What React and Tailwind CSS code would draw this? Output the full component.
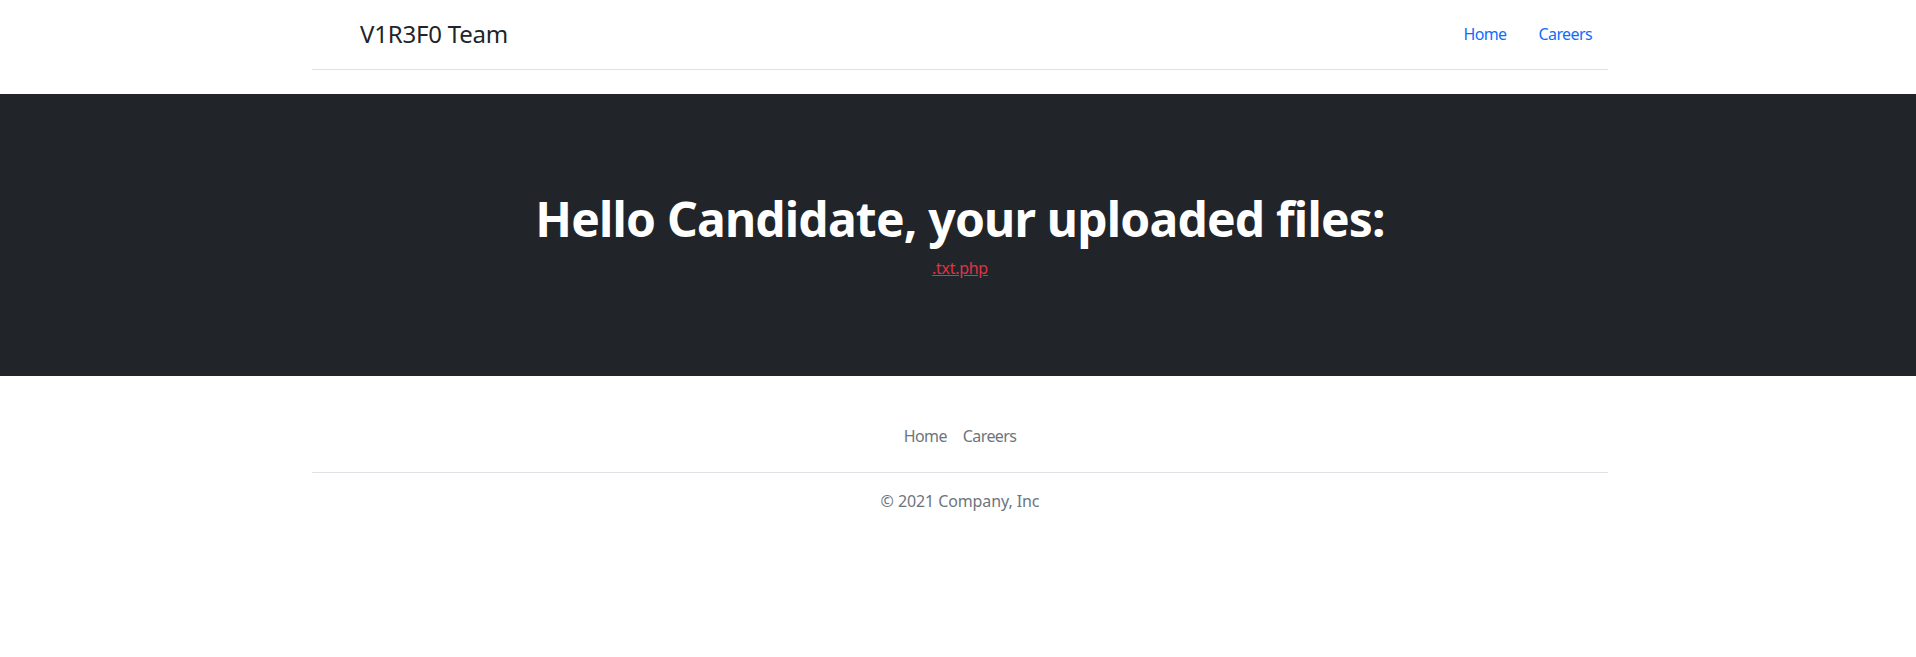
export default function App() {
    return (
        <div className="min-h-[657px] bg-white text-[#212529] font-['Noto_Sans',_'Open_Sans',_sans-serif]">
            {/* Header */}
            <div className="w-[1300px] mx-auto pl-1">
                <header className="flex items-center h-[70px] border-b border-[#dee2e6] mb-6">
                    <a href="#" className="flex items-center mr-auto text-[#212529] no-underline">
                        <svg className="mr-2" width="40" height="32"></svg>
                        <span className="text-2xl leading-9 tracking-[-0.2px] -mt-0.5">V1R3F0 Team</span>
                    </a>
                    <ul className="flex -mt-0.5">
                        <li><a href="#" className="block px-4 py-2 leading-6 text-base tracking-[-0.6px] text-[#0d6efd]">Home</a></li>
                        <li><a href="#" className="block px-4 py-2 leading-6 text-base tracking-[-0.6px] text-[#0d6efd]">Careers</a></li>
                    </ul>
                </header>
            </div>

            {/* Hero */}
            <div className="bg-[#212529] pl-[28px] pr-6 py-12 text-center">
                <div className="py-12">
                    <h1 className="text-5xl leading-[1.2] font-bold tracking-[-0.8px] text-white mb-2">Hello Candidate, your uploaded files:</h1>
                    <div className="leading-6">
                        <a href="#" className="text-base tracking-[-0.3px] text-[#dc3545] underline">.txt.php</a>
                    </div>
                </div>
            </div>

            {/* Footer */}
            <div className="w-[1300px] mx-auto pl-1">
                <footer className="py-4 my-6">
                    <ul className="flex justify-center border-b border-[#dee2e6] pb-4 mb-4">
                        <li><a href="#" className="block px-2 py-2 leading-6 text-base tracking-[-0.6px] text-[#6c757d]">Home</a></li>
                        <li><a href="#" className="block px-2 py-2 leading-6 text-base tracking-[-0.6px] text-[#6c757d]">Careers</a></li>
                    </ul>
                    <p className="text-center text-base leading-6 tracking-[-0.1px] text-[#6c757d]">© 2021 Company, Inc</p>
                </footer>
            </div>
        </div>
    )
}
